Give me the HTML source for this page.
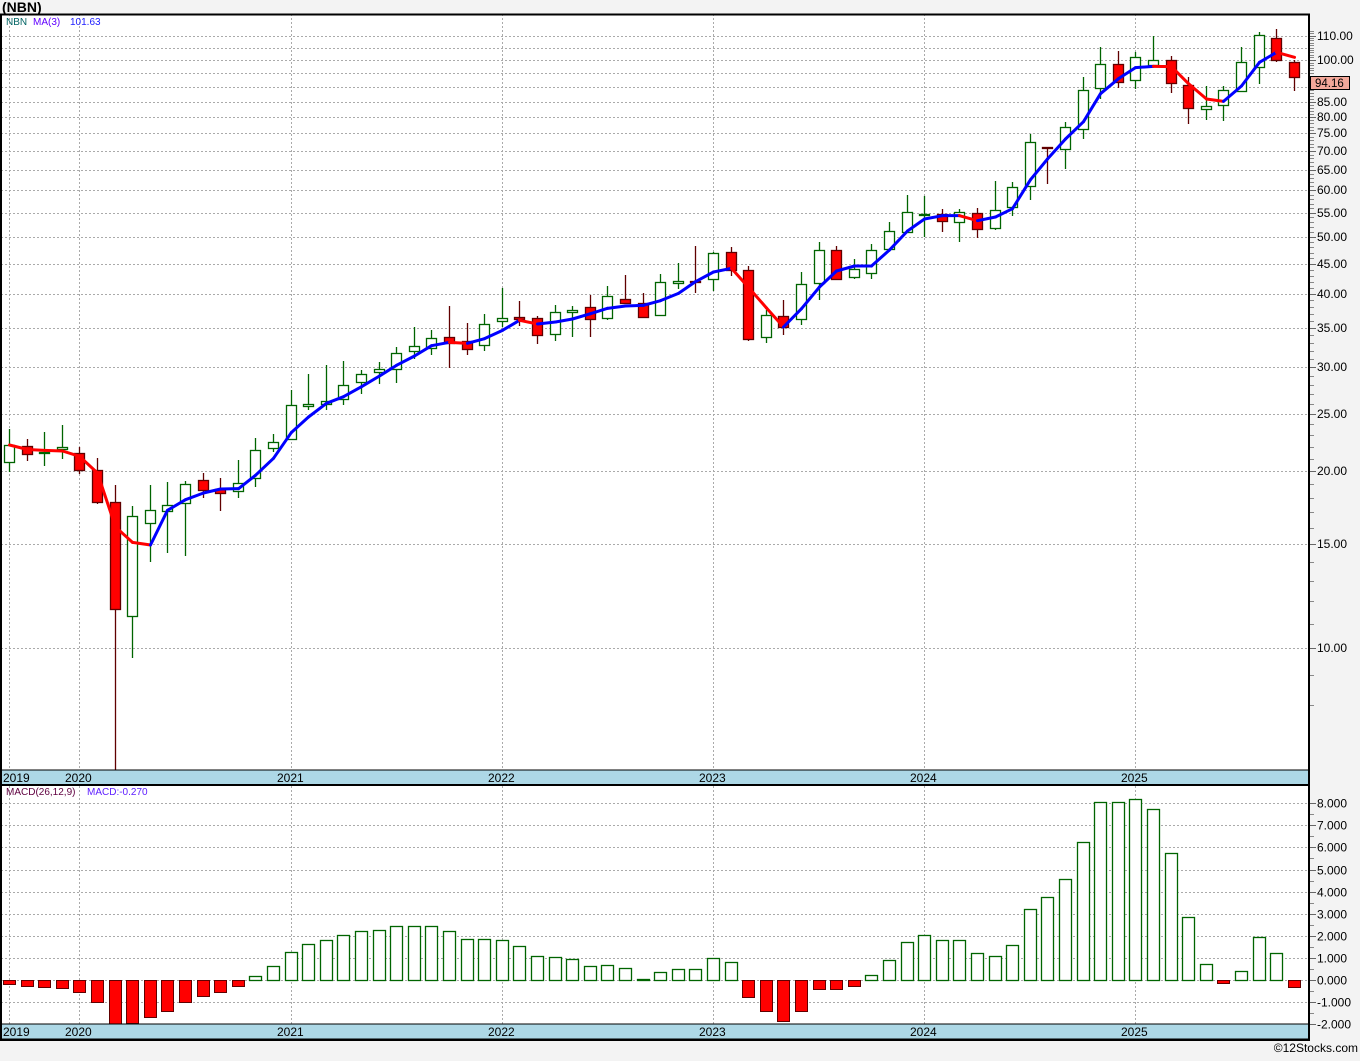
<!DOCTYPE html>
<html><head><meta charset="utf-8">
<style>
html,body{margin:0;padding:0;background:#f3f3f3;}
body{width:1360px;height:1056px;overflow:hidden;font-family:"Liberation Sans",sans-serif;}
svg text{font-family:"Liberation Sans",sans-serif;}
</style></head>
<body>
<svg id="c" width="1360" height="1056" xmlns="http://www.w3.org/2000/svg"></svg>
<script>
const S=document.getElementById('c');
let h='';
const Y=p=>648-588*Math.log10(p/10);
const M=v=>980-22.1*v;
h+='<rect x="0" y="0" width="1360" height="1056" fill="#f3f3f3"/>';
h+='<rect x="1" y="14" width="1308" height="1026" fill="#fff"/>';
const pl=[10,15,20,25,30,35,40,45,50,55,60,65,70,75,80,85,90,95,100,105,110];
pl.forEach(p=>{const y=Math.round(Y(p))+.5;h+=`<line x1="1" x2="1309" y1="${y}" y2="${y}" stroke="#aaa" stroke-dasharray="2,2"/>`;});
for(let p=8;p<=112;p++){const y=Math.round(Y(p))+.5;if(y>16&&y<770)h+=`<line x1="1309" x2="1314" y1="${y}" y2="${y}" stroke="#888"/>`;}
const labs=[10,15,20,25,30,35,40,45,50,55,60,65,70,75,80,85,100,110];
labs.forEach(p=>{const y=Math.round(Y(p));h+=`<line x1="1309" x2="1316" y1="${y+.5}" y2="${y+.5}" stroke="#666"/><text x="1317" y="${y+4}" font-size="12" fill="#000">${p.toFixed(2)}</text>`;});
for(let v=-2;v<=8;v++){const y=Math.round(M(v))+.5;h+=`<line x1="1" x2="1309" y1="${y}" y2="${y}" stroke="#aaa" stroke-dasharray="2,2"/><line x1="1309" x2="1316" y1="${y}" y2="${y}" stroke="#666"/><text x="1317" y="${y+4}" font-size="12" fill="#000">${v.toFixed(3)}</text>`;
 const y2=Math.round(M(v+0.5))+.5; if(v<8)h+=`<line x1="1309" x2="1314" y1="${y2}" y2="${y2}" stroke="#888"/>`;}
[9,79,291,502,713,924,1135].forEach(x=>{h+=`<line x1="${x+.5}" x2="${x+.5}" y1="14" y2="1040" stroke="#aaa" stroke-dasharray="2,2"/>`;});
const C=[[445,462,429,472,1],[446,454,439,461,0],[452,453,432,466,1],[447,449,425,459,1],[453,470,447,474,0],[470,502,458,504,0],[502,609,485,770,0],[516,616,506,658,1],[510,523,485,562,1],[505,511,482,553,1],[484,503,481,556,1],[480,490,473,498,0],[489,493,478,511,0],[483,491,460,498,1],[450,478,438,487,1],[442,448,434,452,1],[405,439,390,440,1],[404,406,374,410,1],[401,404,365,410,1],[385,399,361,405,1],[374,382,370,394,1],[369,372,362,384,1],[353,369,347,383,1],[346,351,327,359,1],[338,348,330,355,1],[337,343,306,368,0],[341,349,323,355,0],[324,345,314,351,1],[318,321,288,327,1],[317,319,301,326,0],[318,335,316,344,0],[312,334,305,341,1],[310,312,306,337,1],[307,319,295,337,0],[296,318,286,320,1],[299,303,275,304,0],[303,317,293,317,0],[282,315,274,316,1],[281,283,263,289,1],[281,282,246,293,0],[253,279,252,291,1],[252,270,247,276,0],[270,339,266,341,0],[315,337,310,343,1],[316,327,300,335,0],[284,319,272,325,1],[250,283,242,300,1],[250,279,246,280,0],[269,277,259,279,1],[250,273,244,279,1],[231,249,222,250,1],[212,232,195,233,1],[214,215,196,237,1],[214,221,209,232,0],[212,222,209,242,1],[213,229,208,238,0],[210,228,181,230,1],[187,207,182,216,1],[142,186,134,200,1],[147,148,147,184,0],[127,149,122,169,1],[90,129,77,139,1],[64,88,47,99,1],[64,82,51,88,0],[57,80,52,89,1],[60,65,36,66,1],[60,83,56,93,0],[85,108,77,124,0],[106,109,86,120,1],[90,105,86,121,1],[62,91,47,91,1],[35,67,32,84,1],[38,60,29,62,0],[62,77,60,91,0]];
const X=i=>Math.round(9+i*17.6);
const closes=[];
C.forEach((c,i)=>{const x=X(i);const[t,b,hi,lo,up]=c;const col=up?'#006400':'#600000';
 h+=`<line x1="${x+.5}" x2="${x+.5}" y1="${hi}" y2="${Math.min(lo,770)}" stroke="${col}" stroke-width="1.3"/>`;
 const bh=Math.max(b-t,1);
 h+=`<rect x="${x-4.5}" y="${t+.5}" width="10" height="${bh}" fill="${up?'#fff':'#f00'}" stroke="${col}" stroke-width="1.3"/>`;
 closes.push(up?t:b);});
const ma=closes.map((c,i)=>{const a=closes.slice(Math.max(0,i-2),i+1);return a.reduce((s,v)=>s+v,0)/a.length;});
for(let i=1;i<ma.length;i++){const col=ma[i]<=ma[i-1]?'#0000ff':'#ff0000';
 h+=`<line x1="${X(i-1)+.5}" y1="${ma[i-1]}" x2="${X(i)+.5}" y2="${ma[i]}" stroke="${col}" stroke-width="3" stroke-linecap="round"/>`;}
const MV=[984,986,987,988,992,1002,1024,1023,1017,1011,1002,996,992,986,976,966,952,944,940,935,931,930,926,926,926,931,939,939,940,946,956,957,959,966,965,968,979,972,969,969,958,962,997,1011,1021,1011,989,989,986,975,960,942,935,940,940,953,956,945,909,897,879,842,802,802,799,809,853,917,964,983,971,937,953,987];
MV.forEach((v,i)=>{const x=X(i);if(v>980)h+=`<rect x="${x-5.5}" y="980.5" width="12" height="${v-980}" fill="#f00" stroke="#600000"/>`;
 else h+=`<rect x="${x-5.5}" y="${v+.5}" width="12" height="${980-v}" fill="#fff" stroke="#006400" stroke-width="1.3"/>`;});
const yrs=[[9,'2019'],[79,'2020'],[291,'2021'],[502,'2022'],[713,'2023'],[924,'2024'],[1135,'2025']];
[770,1024].forEach(y=>{h+=`<rect x="1" y="${y}" width="1308" height="15" fill="#add8e6" stroke="#000"/>`;
 yrs.forEach(([x,t])=>{h+=`<text x="${x===9?3:x-14}" y="${y+12}" font-size="12" fill="#000">${t}</text>`;});});
h+='<rect x="1" y="14.5" width="1308" height="1025.5" fill="none" stroke="#000" stroke-width="2"/>';
h+='<line x1="1" x2="1309" y1="785" y2="785" stroke="#000" stroke-width="2"/>';
h+='<rect x="1310.5" y="76.5" width="39" height="13" fill="#f4a89a" stroke="#000"/><text x="1315" y="87" font-size="11.5">94.16</text>';
h+='<text x="2" y="12" font-size="14" font-weight="bold">(NBN)</text>';
h+='<text x="6" y="25" font-size="10" fill="#006464">NBN</text><text x="33" y="25" font-size="10" fill="#6000ff">MA(3)</text><text x="70" y="25" font-size="10" fill="#2020ff">101.63</text>';
h+='<text x="6" y="795" font-size="10" fill="#600040">MACD(26,12,9)</text><text x="87" y="795" font-size="10" fill="#6020ff">MACD:-0.270</text>';
h+='<text x="1358" y="1052" font-size="12" text-anchor="end">©12Stocks.com</text>';
S.innerHTML=h;
</script>
</body></html>
